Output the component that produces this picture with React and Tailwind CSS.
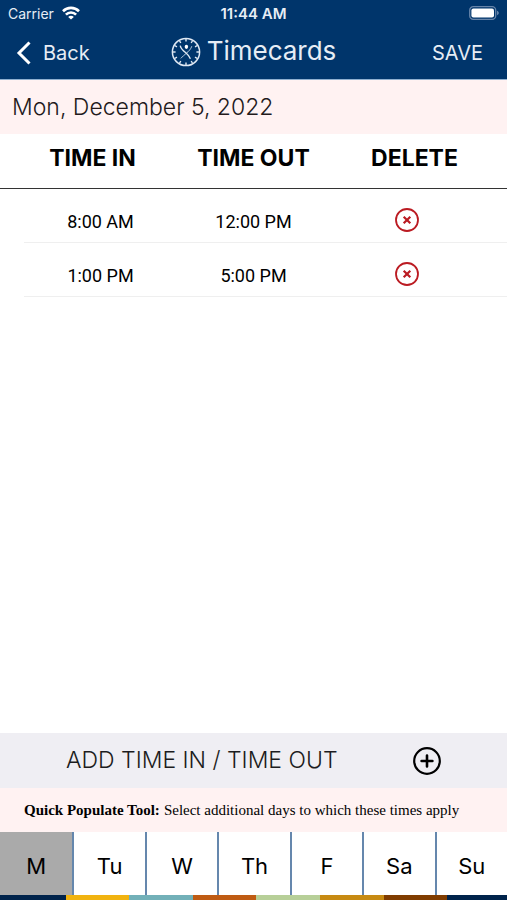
import React from "react";

const entries = [
  { timeIn: "8:00 AM", timeOut: "12:00 PM" },
  { timeIn: "1:00 PM", timeOut: "5:00 PM" },
];

const days = ["M", "Tu", "W", "Th", "F", "Sa", "Su"];

const stripes = [
  "bg-[#00234b]",
  "bg-[#f1b310]",
  "bg-[#72b0b8]",
  "bg-[#bf5b13]",
  "bg-[#b7cf98]",
  "bg-[#c78a12]",
  "bg-[#803c00]",
  "bg-[#00234b]",
];

const ticks = [0, 30, 60, 90, 120, 150, 180, 210, 240, 270, 300, 330];

function WifiIcon() {
  return (
    <svg viewBox="0 0 18 14" className="w-[18px] h-[14px]" fill="none" stroke="white" strokeWidth="2.6">
      <path d="M1 5.2a11.4 11.4 0 0 1 16 0" />
      <path d="M3.900 8.600a7.200 7.200 0 0 1 10.200 0" />
      <path d="M9 13.600 6.200 10.900a3.900 3.900 0 0 1 5.600 0z" fill="white" stroke="none" />
    </svg>
  );
}

function BatteryIcon() {
  return (
    <svg viewBox="0 0 30 14" className="w-[30px] h-[14px]">
      <rect x="0.7" y="0.7" width="26" height="12.6" rx="3.6" fill="none" stroke="#6684a9" strokeWidth="1.3" />
      <rect x="2.4" y="2.4" width="22.6" height="9.2" rx="2" fill="white" />
      <path d="M28 4.8c1.1.4 1.8 1.2 1.8 2.2S29.1 8.8 28 9.2z" fill="#6684a9" />
    </svg>
  );
}

function ClockIcon() {
  return (
    <svg viewBox="0 0 30 30" className="w-[30px] h-[30px]" fill="none" stroke="#dfe8f3">
      <circle cx="15" cy="15" r="13.6" strokeWidth="1.5" />
      {ticks.map((deg) => (
        <path key={deg} d="M15 2v2.6" strokeWidth="1.4" transform={`rotate(${deg} 15 15)`} />
      ))}
      <path d="M9.2 8.6c.8 3.2 3 5.2 5.6 7.2 2 1.7 3.6 3.6 4.6 6" strokeWidth="1.4" />
      <path d="M20.800 9.200c-1 3-3 5-5.600 7.200-2 1.600-3.600 3-5.400 5" strokeWidth="0.8" />
      <ellipse cx="15.4" cy="9.8" rx="1.7" ry="2.1" fill="white" stroke="none" />
    </svg>
  );
}

function DeleteIcon() {
  return (
    <svg viewBox="0 0 24 24" className="w-6 h-6" fill="none" stroke="#bb1b22">
      <circle cx="12" cy="12" r="11" strokeWidth="1.8" />
      <path d="m8.700 8.700 6.600 6.600m0-6.600-6.600 6.600" strokeWidth="2.200" />
    </svg>
  );
}

function AddIcon() {
  return (
    <svg viewBox="0 0 28 28" className="w-7 h-7" fill="none" stroke="black">
      <circle cx="14" cy="14" r="12.8" strokeWidth="2.2" />
      <path d="M14 8.600v10.800M8.600 14h10.800" strokeWidth="2.600" strokeLinecap="round" />
    </svg>
  );
}

export default function App() {
  return (
    <div className="min-h-screen flex flex-col bg-white text-black font-['Inter',sans-serif]">
      <header className="bg-[#00356b] text-[#e6edf5]">
        <div className="grid grid-cols-3 items-center h-7 pl-2 pr-2">
          <div className="flex items-center gap-2 pb-0.5">
            <span className="text-[14px]">Carrier</span>
            <WifiIcon />
          </div>
          <span className="text-center text-[15px] leading-5 font-semibold">11:44 AM</span>
          <div className="flex justify-end pb-0.5">
            <BatteryIcon />
          </div>
        </div>
        <div className="grid grid-cols-[1fr_auto_1fr] items-center h-[51px] pb-1">
          <button type="button" className="flex items-center gap-3 pl-4 pt-0.5 text-[20px]">
            <svg viewBox="0 0 15 24" className="w-[15px] h-6" fill="none" stroke="white" strokeWidth="3">
              <path d="M13.5 1.5 3 12l10.500 10.500" />
            </svg>
            Back
          </button>
          <h1 className="flex justify-center gap-1.5 text-[26px] leading-7">
            <ClockIcon />
            Timecards
          </h1>
          <button type="button" className="justify-self-end pr-6 pt-0.5 text-[20px]">
            SAVE
          </button>
        </div>
      </header>

      <main className="flex-1 flex flex-col">
        <h2 className="h-[55px] flex items-center px-3 border-t border-[#8fb0d0] bg-[#fff2f2] text-[#231a1c] text-[23px] font-light">
          Mon, December 5, 2022
        </h2>

        <table className="block">
          <thead className="block border-b border-[#333333]">
            <tr className="grid grid-cols-3 h-[54px] px-3 pb-1.5 items-center text-[23px]">
              <th className="font-bold">TIME IN</th>
              <th className="font-bold">TIME OUT</th>
              <th className="font-bold">DELETE</th>
            </tr>
          </thead>
          <tbody className="block">
            {entries.map((entry) => (
              <tr
                key={entry.timeIn}
                className="grid grid-cols-3 items-center h-[54px] ml-6 pr-6 pt-3 border-b border-[#efefef] text-center text-[18px] font-['Roboto',sans-serif]"
              >
                <td>{entry.timeIn}</td>
                <td>{entry.timeOut}</td>
                <td className="flex justify-center pb-1">
                  <button type="button" aria-label="Delete">
                    <DeleteIcon />
                  </button>
                </td>
              </tr>
            ))}
          </tbody>
        </table>
      </main>

      <footer>
        <button
          type="button"
          className="w-full h-[55px] flex items-center justify-between px-[66px] bg-[#efeef3] text-[#1c1c20] text-[23px] font-light"
        >
          ADD TIME IN / TIME OUT
          <AddIcon />
        </button>
        <p className="h-11 flex items-center gap-1 px-6 bg-[#fff2f2] text-[15px] font-['Liberation_Serif',serif]">
          <b>Quick Populate Tool:</b> Select additional days to which these times apply
        </p>
        <div className="grid grid-cols-7 h-[63px]">
          {days.map((day, i) => (
            <button
              key={day}
              type="button"
              className={`pt-1.5 text-[22px] border-[#6587ad] ${
                i === 0 ? "bg-[#aaaaaa]" : "bg-white border-l-2"
              }`}
            >
              {day}
            </button>
          ))}
        </div>
        <div className="grid grid-cols-[66fr_repeat(6,64fr)_60fr] h-[5px]">
          {stripes.map((color, i) => (
            <span key={i} className={color} />
          ))}
        </div>
      </footer>
    </div>
  );
}
